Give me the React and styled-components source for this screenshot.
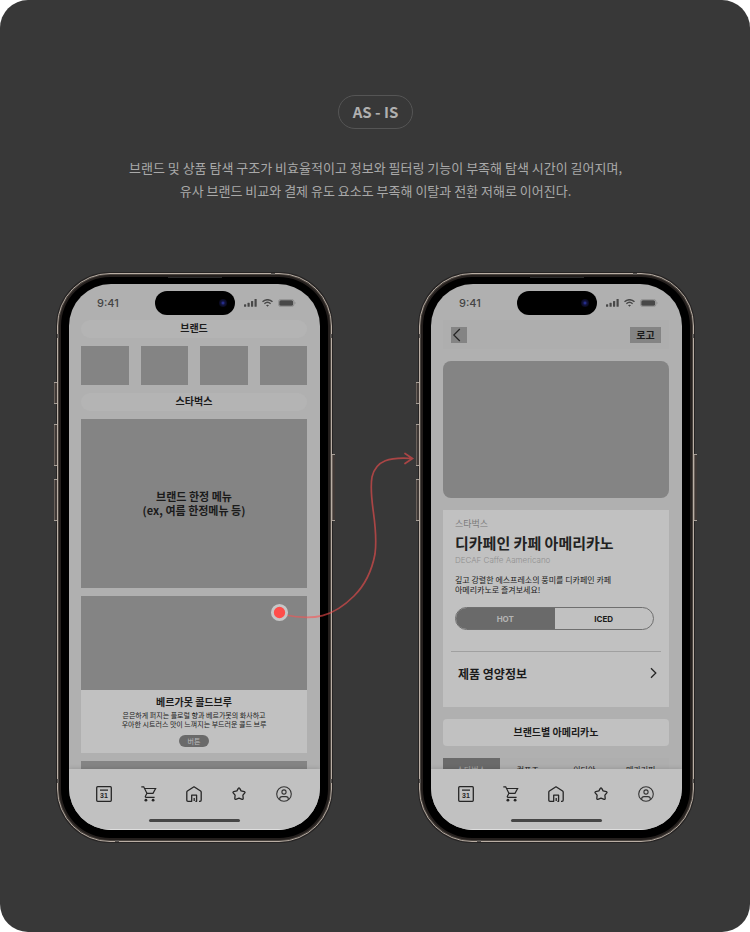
import React from "react";
import styled, { createGlobalStyle, css } from "styled-components";

const GlobalStyle = createGlobalStyle`
  *, *::before, *::after { box-sizing: border-box; }
  body {
    margin: 0;
    background: #ffffff;
    font-family: "Noto Sans CJK KR", "Inter", sans-serif;
  }
  h1, h2, h3, p, ul { margin: 0; padding: 0; }
  button {
    margin: 0;
    padding: 0;
    border: 0;
    background: none;
    font: inherit;
    color: inherit;
    cursor: pointer;
  }
`;

const ink = "#1b1b1b";

const Page = styled.main`
  display: flex;
  flex-direction: column;
  align-items: center;
  min-height: 100vh;
  padding: 95px 56px 90px 57px;
  border-radius: 28px;
  background: #383838;
`;

const Badge = styled.h1`
  display: flex;
  align-items: center;
  justify-content: center;
  height: 34px;
  padding: 0 14px;
  border: 1px solid #555555;
  border-radius: 17px;
  color: #b0b0b0;
  font-size: 15px;
  font-weight: 600;
  line-height: 20px;
`;

const Summary = styled.p`
  margin-top: 27px;
  color: #a9a9a9;
  font-size: 13px;
  line-height: 23px;
  text-align: center;
`;

const Stage = styled.div`
  position: relative;
  display: grid;
  grid-template-columns: 275fr 275fr;
  column-gap: 13.66%;
  width: 100%;
  max-width: 637px;
  margin-top: 71px;
`;

const Device = styled.section`
  position: relative;
  display: flex;
  aspect-ratio: 275 / 569;
  padding: 10px 11px 11px;
  border: 1px solid #b9aea4;
  border-radius: 53px;
  background: #000000;
  box-shadow: inset 0 0 0 1px #4a443f, inset 0 0 0 3px #241f1d, 0 0 0 1px #262424;
`;

const SideKey = styled.span`
  position: absolute;
  top: ${(p) => p.$top};
  ${(p) => p.$side}: -4px;
  width: 3px;
  height: ${(p) => p.$length};
  border-top: 1px solid #a79f97;
  border-bottom: 1px solid #a79f97;
  background: linear-gradient(90deg, #6b625c 33%, #3f3835 33%);
`;

const Antenna = styled.span`
  position: absolute;
  background: #55514e;
  ${(p) =>
    p.$side === "left" || p.$side === "right"
      ? css`
          top: ${p.$at};
          ${p.$side}: -1px;
          width: 2px;
          height: 4px;
        `
      : css`
          left: ${p.$at};
          ${p.$side}: -1px;
          width: 4px;
          height: 2px;
        `}
`;

const Speaker = styled.span`
  position: absolute;
  top: 3px;
  left: 50%;
  width: 54px;
  height: 1px;
  margin-left: -27px;
  background: #2b2b2b;
`;

const Screen = styled.div`
  display: flex;
  flex: 1;
  flex-direction: column;
  min-width: 0;
  overflow: hidden;
  border-radius: 42px;
  background: #b0b0b0;
  color: ${ink};
`;

const StatusRow = styled.div`
  display: grid;
  flex: none;
  grid-template-columns: 1fr 80px 1fr;
  align-items: center;
  height: 36px;
  padding: 7px 24px 5px;
`;

const Clock = styled.time`
  padding-left: 4px;
  color: #444444;
  font-family: "Inter", sans-serif;
  font-size: 11px;
  font-weight: 500;
  line-height: 14px;
`;

const Island = styled.div`
  display: flex;
  align-items: center;
  justify-content: flex-end;
  height: 24px;
  padding-right: 8px;
  border-radius: 12px;
  background: #000000;
`;

const Lens = styled.span`
  width: 8px;
  height: 8px;
  border-radius: 50%;
  background: radial-gradient(circle, #252c8c 0 12%, #12143f 35%, #08081c 70%);
`;

const StatusIcons = styled.div`
  display: flex;
  align-items: center;
  justify-content: flex-end;
  gap: 5px;
`;

const Feed = styled.div`
  display: flex;
  flex: 1;
  flex-direction: column;
  gap: ${(p) => p.$gap};
  min-height: 0;
  padding: 0 13px 0 12px;
  overflow: hidden;
  > * { flex: none; }
`;

const SectionPill = styled.h2`
  height: 18px;
  border-radius: 9px;
  background: #b4b4b4;
  font-size: 10px;
  font-weight: 700;
  line-height: 16px;
  text-align: center;
`;

const BrandGrid = styled.div`
  display: grid;
  grid-template-columns: repeat(4, 1fr);
  gap: 12px;
`;

const BrandTile = styled.button`
  height: 39px;
  background: #848484;
`;

const Promo = styled.div`
  display: flex;
  align-items: center;
  justify-content: center;
  height: 169px;
  padding-bottom: 2px;
  background: #848484;
  font-size: 11px;
  font-weight: 700;
  line-height: 14px;
  text-align: center;
`;

const MenuCard = styled.article`
  background: #c1c1c1;
`;

const MenuImage = styled.div`
  height: 94px;
  background: #848484;
`;

const MenuBody = styled.div`
  display: flex;
  flex-direction: column;
  align-items: center;
  padding: 6px 0;
  text-align: center;
`;

const MenuTitle = styled.h3`
  font-size: 10px;
  font-weight: 700;
  line-height: 12px;
`;

const MenuText = styled.p`
  margin-top: 3px;
  font-size: 7px;
  line-height: 9px;
`;

const MenuButton = styled.button`
  width: 30px;
  height: 12px;
  margin-top: 6px;
  border-radius: 6px;
  background: #6a6a6a;
  color: #bdbdbd;
  font-size: 7px;
  line-height: 12px;
`;

const TopBar = styled.header`
  display: flex;
  align-items: center;
  justify-content: space-between;
  height: 29px;
  padding: 0 8px;
  background: #aeaeae;
`;

const TopButton = styled.button`
  display: flex;
  align-items: center;
  justify-content: ${(p) => (p.$wide ? "center" : "flex-start")};
  width: ${(p) => (p.$wide ? "31px" : "16px")};
  height: 16px;
  background: #848484;
  font-size: 10px;
  font-weight: 700;
  line-height: 14px;
`;

const Hero = styled.div`
  height: 137px;
  border-radius: 8px;
  background: #848484;
`;

const Product = styled.article`
  padding: 9px 0 13px;
  background: #c1c1c1;
`;

const ProductInfo = styled.div`
  padding: 0 15px 0 12px;
`;

const ProductBrand = styled.p`
  color: #7b7b7b;
  font-size: 9px;
  line-height: 10px;
`;

const ProductName = styled.h2`
  margin-top: 4px;
  color: #222222;
  font-size: 15px;
  font-weight: 700;
  line-height: 20px;
  white-space: nowrap;
`;

const ProductLatin = styled.p`
  margin-top: 2px;
  color: #8f8f8f;
  font-family: "Inter", sans-serif;
  font-size: 8px;
  font-weight: 300;
  line-height: 10px;
`;

const ProductText = styled.p`
  margin-top: 10px;
  font-size: 8px;
  line-height: 10px;
  white-space: nowrap;
`;

const Toggle = styled.div`
  display: flex;
  height: 23px;
  margin-top: 12px;
  overflow: hidden;
  border: 1px solid #6f6f6f;
  border-radius: 12px;
`;

const ToggleOption = styled.button`
  flex: 1;
  background: ${(p) => (p.$active ? "#6a6a6a" : "transparent")};
  color: ${(p) => (p.$active ? "#b4b4b4" : ink)};
  font-family: "Inter", sans-serif;
  font-size: 8px;
  font-weight: 700;
`;

const Nutrition = styled.button`
  display: flex;
  align-items: center;
  justify-content: space-between;
  width: calc(100% - 16px);
  height: 43px;
  margin: 21px 8px 0;
  padding: 0 4px 0 7px;
  border-top: 1px solid #a0a0a0;
  font-size: 12px;
  font-weight: 700;
`;

const CompareTitle = styled.h2`
  height: 27px;
  border-radius: 4px;
  background: #c1c1c1;
  font-size: 10px;
  font-weight: 700;
  line-height: 26px;
  text-align: center;
`;

const BrandTabs = styled.div`
  display: grid;
  grid-template-columns: repeat(4, 1fr);
  background: #aeaeae;
`;

const BrandTab = styled.button`
  height: 23px;
  background: ${(p) => (p.$active ? "#6a6a6a" : "transparent")};
  color: ${(p) => (p.$active ? "#aaaaaa" : ink)};
  font-size: 8px;
  line-height: 22px;
`;

const TabBar = styled.nav`
  display: flex;
  flex: none;
  flex-direction: column;
  align-items: center;
  height: 61px;
  padding: 15px 13px 0 12px;
  border-bottom: 1px solid #dedede;
  background: #c1c1c1;
  box-shadow: 0 -1px 4px rgba(0, 0, 0, 0.12);
`;

const TabList = styled.div`
  display: grid;
  grid-template-columns: repeat(5, 1fr);
  width: 100%;
`;

const TabItem = styled.button`
  display: flex;
  align-items: center;
  justify-content: center;
  height: 20px;
`;

const HomeIndicator = styled.span`
  width: 91px;
  height: 3px;
  margin-top: 15px;
  border-radius: 2px;
  background: #464646;
`;

const Connector = styled.svg`
  position: absolute;
  top: 0;
  left: 0;
  width: 100%;
  height: auto;
  overflow: visible;
  pointer-events: none;
`;

const Glyph = styled.svg`
  display: block;
  flex: none;
  fill: none;
  stroke: ${(p) => p.$tone || "#262626"};
  stroke-width: ${(p) => p.$weight || 1.3};
`;

const Signal = () => (
  <svg width="13" height="8" viewBox="0 0 13 8" fill="#484848" aria-hidden="true">
    <rect x="0" y="5.2" width="2.2" height="2.6" rx="0.6" />
    <rect x="3.5" y="3.8" width="2.2" height="4" rx="0.6" />
    <rect x="7" y="2" width="2.2" height="5.8" rx="0.6" />
    <rect x="10.5" y="0" width="2.2" height="7.8" rx="0.6" />
  </svg>
);

const Wifi = () => (
  <Glyph width="11" height="8" viewBox="0 0 11 8" $tone="#484848" $weight={1.4} aria-hidden="true">
    <path d="M0.5 2.7C3.3 0 7.7 0 10.5 2.7M2.4 4.7C4.2 3 6.8 3 8.6 4.7" />
    <path d="M5.5 7.7L4 6.2C4.8 5.5 6.2 5.5 7 6.2Z" fill="#484848" stroke="none" />
  </Glyph>
);

const Battery = () => (
  <svg width="18" height="8" viewBox="0 0 18 8" aria-hidden="true">
    <rect x="0.4" y="0.4" width="15.6" height="7.2" rx="2.4" fill="none" stroke="#858585" strokeWidth="0.7" />
    <rect x="1.3" y="1.2" width="13.8" height="5.6" rx="1.6" fill="#484848" />
    <path d="M16.8 2.8C17.6 3.1 17.6 4.9 16.8 5.2Z" fill="#858585" />
  </svg>
);

const CalendarIcon = () => (
  <Glyph width="16" height="16" viewBox="0 0 16 16" aria-hidden="true">
    <rect x="0.7" y="0.7" width="14.6" height="14.6" rx="1" />
    <path d="M4 4.1H12" />
    <text x="8" y="12.4" textAnchor="middle" fill="#262626" stroke="none" fontFamily="Liberation Sans, sans-serif" fontSize="7" fontWeight="700">
      31
    </text>
  </Glyph>
);

const CartIcon = () => (
  <Glyph width="16" height="16" viewBox="0 0 16 16" $weight={1.2} aria-hidden="true">
    <path d="M0.3 0.8H2.7L5.9 7.3L4.4 10.2C4.1 10.8 4.4 11.3 5 11.3H13.6" />
    <path d="M3.5 2.5H14.6L12 7.3H5.9" />
    <circle cx="4.9" cy="14.2" r="1.4" fill="#262626" stroke="none" />
    <circle cx="12.1" cy="14.2" r="1.4" fill="#262626" stroke="none" />
  </Glyph>
);

const HouseIcon = () => (
  <Glyph width="16" height="16" viewBox="0 0 16 16" $weight={1.3} strokeLinejoin="round" aria-hidden="true">
    <path d="M4 15.3H2Q0.8 15.3 0.8 14.1V6.2Q0.8 5.5 1.4 5L8 0.8L14.6 5Q15.2 5.5 15.2 6.2V14.1Q15.2 15.3 14 15.3H13" />
    <path d="M4 15.3H5.7V9.2H10.6V15.3H9.4M8.2 15V12" />
  </Glyph>
);

const StarIcon = () => (
  <Glyph width="16" height="16" viewBox="0 0 16 16" $weight={1.3} strokeLinejoin="round" aria-hidden="true">
    <path d="M7.3 2.4Q8 1.5 8.7 2.4L10.1 4.9L13.3 5.6Q14.4 6 13.8 6.9L11.9 9.2L12.2 12.5Q12.1 13.7 11.1 13.4L8 12.2L4.9 13.4Q3.9 13.7 3.8 12.5L4.1 9.2L2.2 6.9Q1.6 6 2.7 5.6L5.9 4.9Z" />
  </Glyph>
);

const ProfileIcon = () => (
  <Glyph width="16" height="16" viewBox="0 0 16 16" $tone="#333333" $weight={1.1} aria-hidden="true">
    <circle cx="8" cy="8" r="7.3" />
    <circle cx="8" cy="6" r="2.1" />
    <path d="M3.7 13.7V12.8Q3.7 10.6 6 10.6H10Q12.3 10.6 12.3 12.8V13.7" />
  </Glyph>
);

const tabs = [
  ["캘린더", CalendarIcon],
  ["장바구니", CartIcon],
  ["홈", HouseIcon],
  ["즐겨찾기", StarIcon],
  ["내 정보", ProfileIcon],
];

function Phone({ label, children }) {
  return (
    <Device aria-label={label}>
      <SideKey $side="left" $top="19%" $length="22px" />
      <SideKey $side="left" $top="26.5%" $length="42px" />
      <SideKey $side="left" $top="36.2%" $length="42px" />
      <SideKey $side="right" $top="31.8%" $length="67px" />
      <Antenna $side="left" $at="10.5%" />
      <Antenna $side="right" $at="10.5%" />
      <Antenna $side="left" $at="89%" />
      <Antenna $side="right" $at="89%" />
      <Antenna $side="top" $at="78%" />
      <Antenna $side="bottom" $at="21%" />
      <Speaker />
      <Screen>
        <StatusRow>
          <Clock>9:41</Clock>
          <Island>
            <Lens />
          </Island>
          <StatusIcons>
            <Signal />
            <Wifi />
            <Battery />
          </StatusIcons>
        </StatusRow>
        {children}
        <TabBar>
          <TabList>
            {tabs.map(([name, Icon]) => (
              <TabItem key={name} type="button" aria-label={name}>
                <Icon />
              </TabItem>
            ))}
          </TabList>
          <HomeIndicator />
        </TabBar>
      </Screen>
    </Device>
  );
}

function BrandScreen() {
  return (
    <Feed $gap="8px">
      <SectionPill>브랜드</SectionPill>
      <BrandGrid>
        {[1, 2, 3, 4].map((n) => (
          <BrandTile key={n} type="button" aria-label={`브랜드 ${n}`} />
        ))}
      </BrandGrid>
      <SectionPill>스타벅스</SectionPill>
      <Promo>
        <p>
          브랜드 한정 메뉴
          <br />
          (ex, 여름 한정메뉴 등)
        </p>
      </Promo>
      <MenuCard>
        <MenuImage />
        <MenuBody>
          <MenuTitle>베르가못 콜드브루</MenuTitle>
          <MenuText>
            은은하게 퍼지는 플로럴 향과 베르가못의 화사하고
            <br />
            우아한 시트러스 맛이 느껴지는 부드러운 콜드 브루
          </MenuText>
          <MenuButton type="button">버튼</MenuButton>
        </MenuBody>
      </MenuCard>
      <MenuCard>
        <MenuImage />
      </MenuCard>
    </Feed>
  );
}

function ProductScreen() {
  return (
    <Feed $gap="12px">
      <TopBar>
        <TopButton type="button" aria-label="뒤로">
          <Glyph width="11" height="14" viewBox="0 0 11 14" $weight={1.2} aria-hidden="true">
            <path d="M8.8 1L2.8 7L8.8 13" />
          </Glyph>
        </TopButton>
        <TopButton type="button" $wide>
          로고
        </TopButton>
      </TopBar>
      <Hero />
      <Product>
        <ProductInfo>
          <ProductBrand>스타벅스</ProductBrand>
          <ProductName>디카페인 카페 아메리카노</ProductName>
          <ProductLatin>DECAF Caffe Aamericano</ProductLatin>
          <ProductText>
            깊고 강렬한 에스프레소의 풍미를 디카페인 카페
            <br />
            아메리카노로 즐겨보세요!
          </ProductText>
          <Toggle>
            <ToggleOption type="button" $active aria-pressed="true">
              HOT
            </ToggleOption>
            <ToggleOption type="button" aria-pressed="false">
              ICED
            </ToggleOption>
          </Toggle>
        </ProductInfo>
        <Nutrition type="button">
          제품 영양정보
          <Glyph width="7" height="12" viewBox="0 0 7 12" $weight={1.3} aria-hidden="true">
            <path d="M1 1.2L5.8 6L1 10.8" />
          </Glyph>
        </Nutrition>
      </Product>
      <CompareTitle>브랜드별 아메리카노</CompareTitle>
      <BrandTabs>
        {["스타벅스", "컴포즈", "이디야", "메가커피"].map((name, i) => (
          <BrandTab key={name} type="button" $active={i === 0}>
            {name}
          </BrandTab>
        ))}
      </BrandTabs>
    </Feed>
  );
}

export default function App() {
  return (
    <>
      <GlobalStyle />
      <Page>
        <Badge>AS - IS</Badge>
        <Summary>
          브랜드 및 상품 탐색 구조가 비효율적이고 정보와 필터링 기능이 부족해 탐색 시간이 길어지며,
          <br />
          유사 브랜드 비교와 결제 유도 요소도 부족해 이탈과 전환 저해로 이어진다.
        </Summary>
        <Stage>
          <Phone label="브랜드 화면">
            <BrandScreen />
          </Phone>
          <Phone label="제품 상세 화면">
            <ProductScreen />
          </Phone>
          <Connector viewBox="0 0 637 569" aria-hidden="true">
            <path
              d="M228 342C257 348 276 344 297 323C308 312 315 297 318 281C322 251 311 227 315 204C319 187 333 184 355 185.5M348 180.5L355.5 185.5L348 190.5"
              fill="none"
              stroke="#ff5050"
              strokeOpacity="0.57"
              strokeWidth="1.7"
              strokeLinecap="round"
            />
            <circle cx="222.5" cy="339.5" r="7.1" fill="#ff4d4a" stroke="#c6c6c6" strokeWidth="2.9" />
          </Connector>
        </Stage>
      </Page>
    </>
  );
}
